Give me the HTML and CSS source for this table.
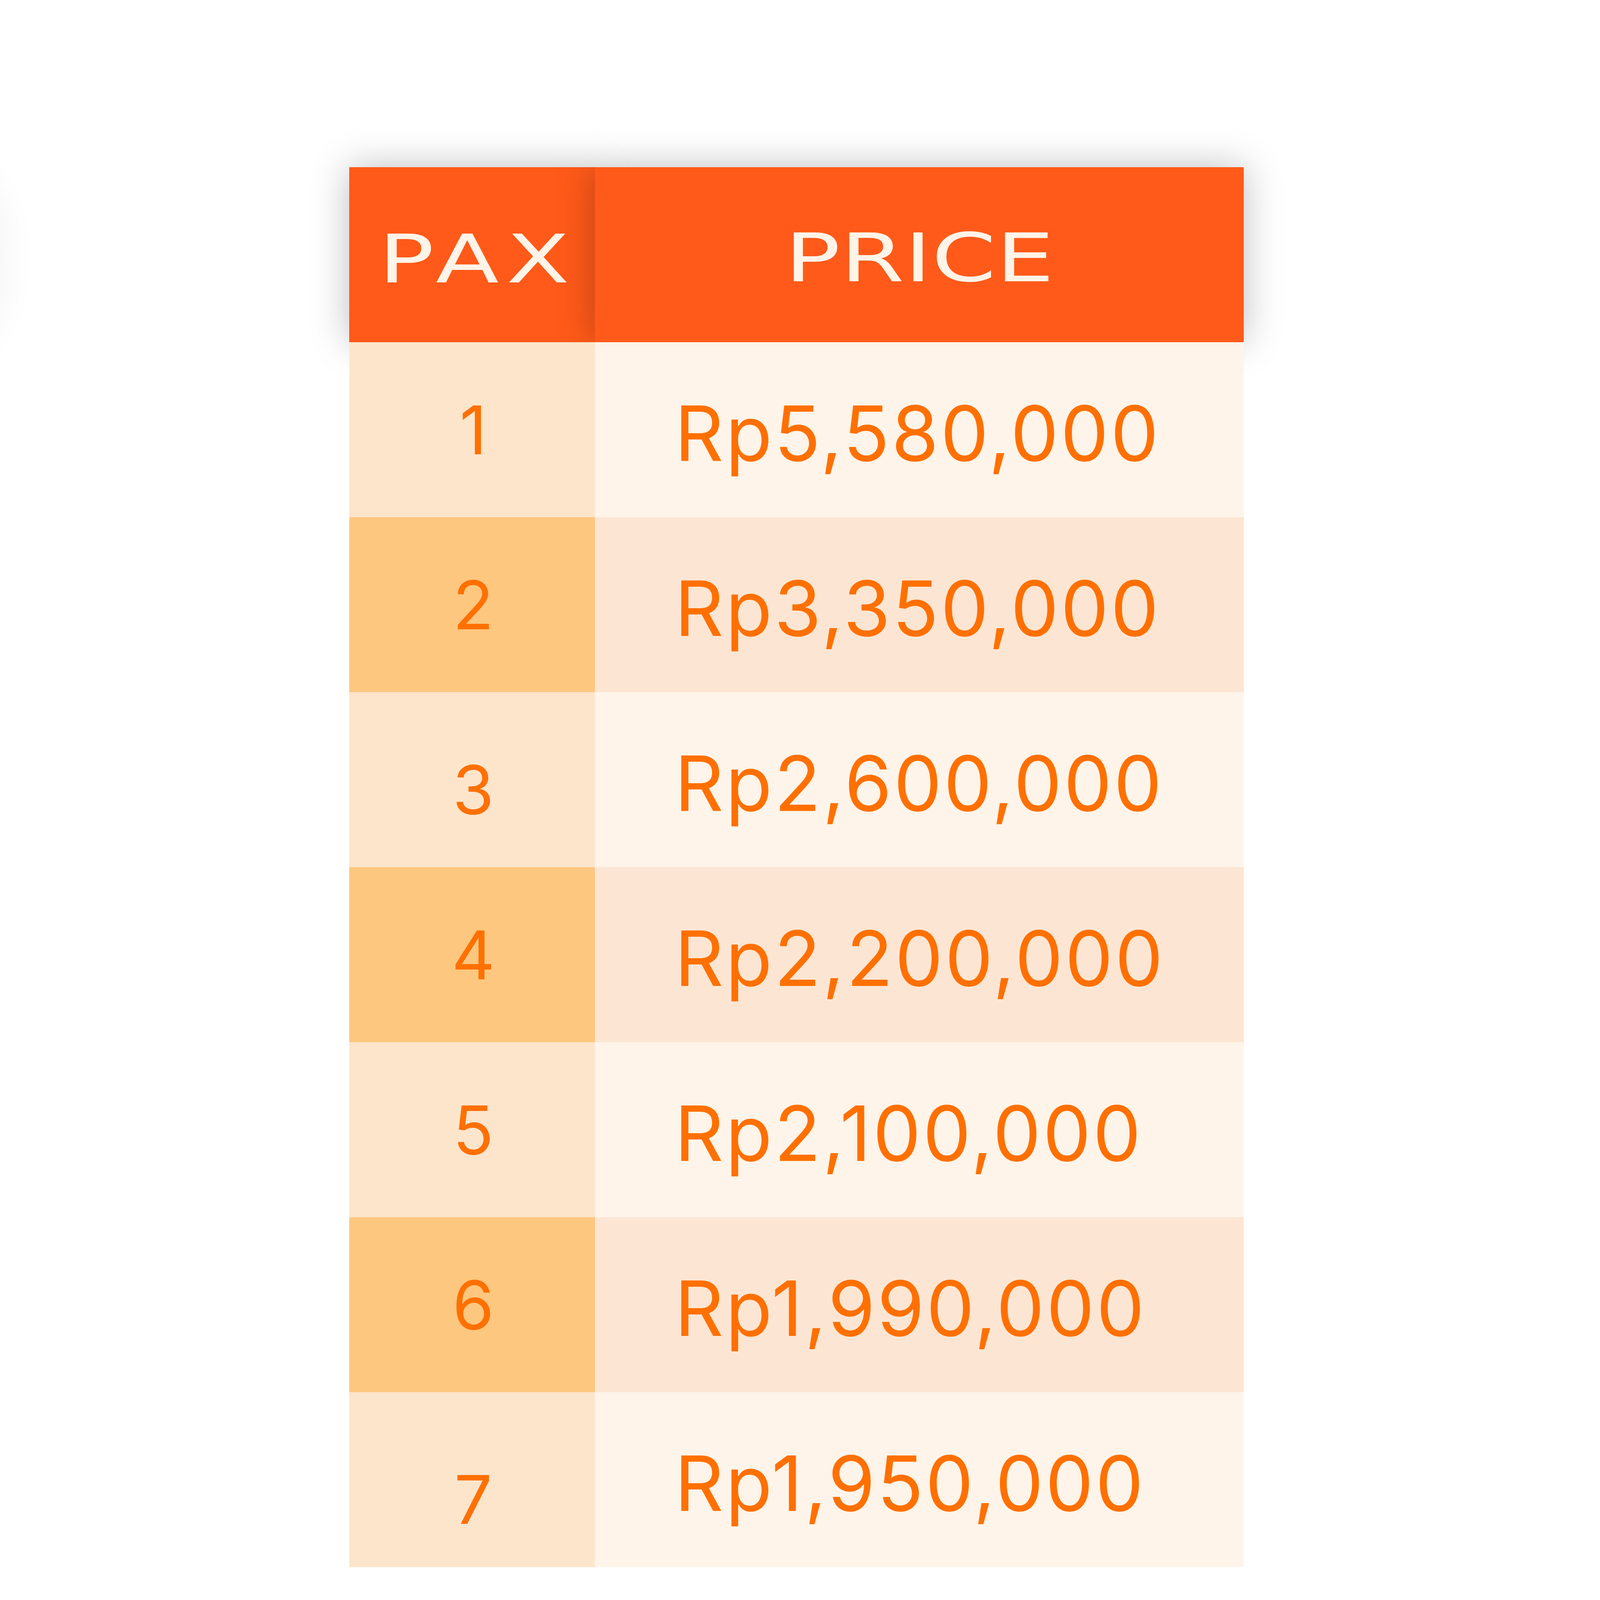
FILE: index.html
```html
<!DOCTYPE html>
<html lang="en">
<head>
<meta charset="utf-8">
<title>Pax Price</title>
<link rel="stylesheet" href="styles.css">
</head>
<body>
<div class="edge-shadow"></div>
<div class="price-table">
  <div class="head head-pax"><span class="head-label">PAX</span></div>
  <div class="head head-price"><span class="head-label">PRICE</span></div>

  <div class="pax odd">1</div>
  <div class="price odd">Rp5,580,000</div>

  <div class="pax even">2</div>
  <div class="price even">Rp3,350,000</div>

  <div class="pax odd low">3</div>
  <div class="price odd">Rp2,600,000</div>

  <div class="pax even">4</div>
  <div class="price even">Rp2,200,000</div>

  <div class="pax odd">5</div>
  <div class="price odd">Rp2,100,000</div>

  <div class="pax even">6</div>
  <div class="price even">Rp1,990,000</div>

  <div class="pax odd lower">7</div>
  <div class="price odd">Rp1,950,000</div>
</div>
</body>
</html>
```

FILE: styles.css
```css
html, body {
  margin: 0;
  background: #ffffff;
}

body {
  padding: 428px 0 0 894px;
}

.edge-shadow {
  position: fixed;
  left: -400px;
  top: 400px;
  width: 400px;
  height: 520px;
  border-radius: 200px;
  box-shadow: 0 0 100px rgba(0, 0, 0, 0.06);
}

.price-table {
  display: grid;
  grid-template-columns: 629px 1661px;
  grid-auto-rows: 448px;
  width: 2290px;
}

.head {
  display: flex;
  align-items: center;
  justify-content: center;
  background: #ff5a19;
  box-shadow: 0 0 90px rgba(0, 0, 0, 0.26);
  font-family: "DejaVu Sans", sans-serif;
  font-size: 171px;
  line-height: 1;
  color: #fff4e8;
  box-sizing: border-box;
}

.head-pax {
  padding-top: 22px;
  padding-left: 30px;
}

.head-pax .head-label {
  letter-spacing: 14px;
}

.head-price {
  padding-top: 16px;
}

.head-label {
  display: inline-block;
  transform: scaleX(1.38);
}

.pax,
.price {
  display: flex;
  align-items: center;
  font-family: "Inter", sans-serif;
  font-weight: 400;
  line-height: 1;
  color: #ff7000;
  box-sizing: border-box;
}

.pax {
  justify-content: center;
  font-size: 172px;
  padding-left: 6px;
}

.pax.low {
  padding-top: 50px;
}

.pax.lower {
  padding-top: 100px;
}

.price {
  justify-content: flex-start;
  font-size: 195px;
  letter-spacing: 5px;
  padding-left: 204px;
  padding-top: 18px;
}

.pax.odd { background: #fde5cc; }
.pax.even { background: #fec77f; }
.price.odd { background: #fef4e9; }
.price.even { background: #fce6d3; }
```
